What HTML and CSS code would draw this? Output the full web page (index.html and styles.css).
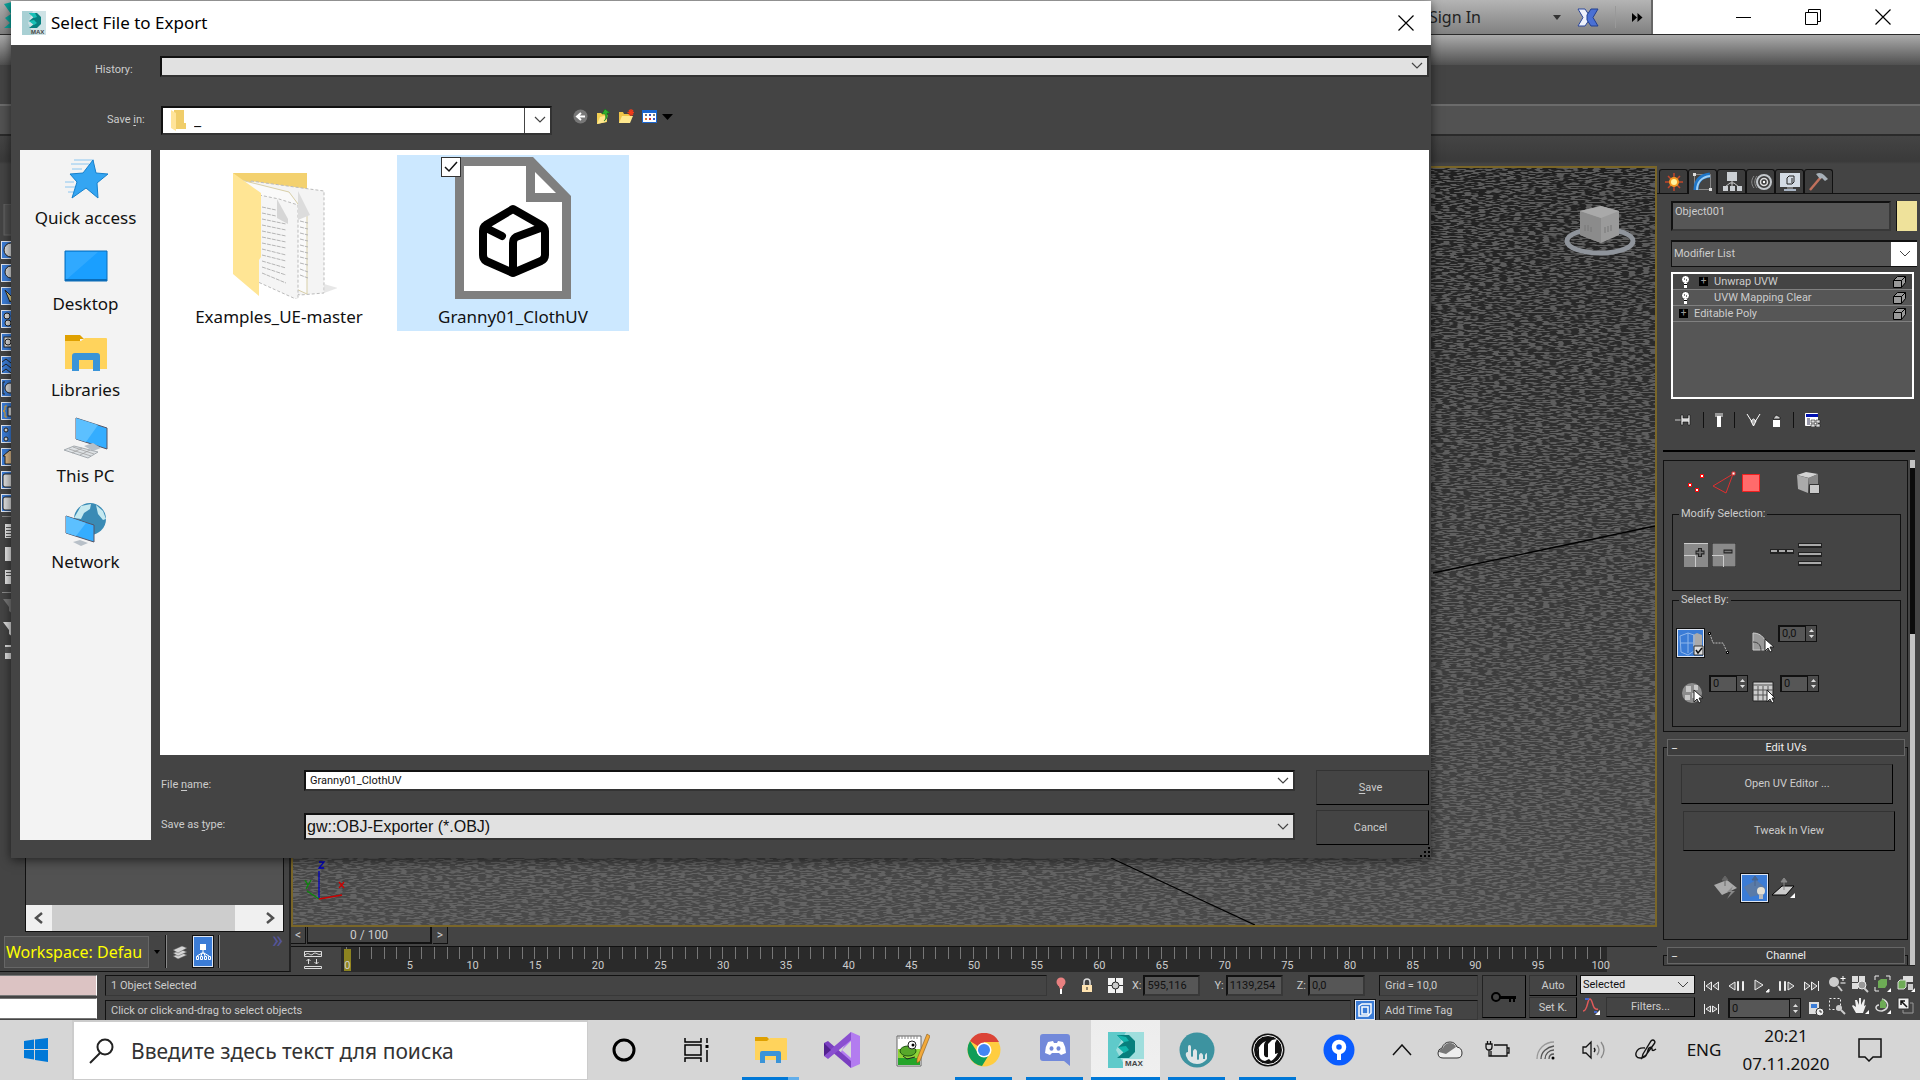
FILE: index.html
```html
<!DOCTYPE html>
<html lang="en">
<head>
<meta charset="utf-8">
<title>Select File to Export</title>
<link rel="stylesheet" href="styles.css">
</head>
<body>
<div class="app">
  <header class="titlebar">
    <svg class="app-logo" width="40" height="34" viewBox="0 0 40 34"><path d="M4 4l8-2 8 8v12l-8 6H4l6-5-5-5 6-4z" fill="#0aa39b"/></svg>
    <div class="info-center">
      <a href="#" class="sign-in">Sign In</a>
      <svg width="8" height="5" viewBox="0 0 8 5"><path d="M0 0h8L4 5z" fill="#333"/></svg>
      <svg class="exchange" width="22" height="19" viewBox="0 0 22 19"><path d="M1 1h7l4 6v5l-4 6H1l5-8.500z" fill="#eef1fa" stroke="#2b479c"/><path d="M21 1h-7l-4 6v5l4 6h7l-5-8.500z" fill="#4a70d4" stroke="#23408f"/></svg>
      <span class="info-sep"></span>
      <svg width="11" height="9" viewBox="0 0 11 9"><path d="M0 0l5 4.500L0 9zM5.500 0l5 4.500-5 4.500z" fill="#000"/></svg>
    </div>
    <div class="window-buttons">
      <button aria-label="Minimize"><svg width="16" height="16" viewBox="0 0 16 16"><path d="M1 8.500h15" stroke="#000"/></svg></button>
      <button aria-label="Restore"><svg width="16" height="16" viewBox="0 0 16 16" fill="none" stroke="#000"><path d="M.5 3.500h12v12H.5zM3.500 3V.5h12v12H13"/></svg></button>
      <button aria-label="Close"><svg width="16" height="16" viewBox="0 0 16 16"><path d="M.5.500l15 15M15.500.500l-15 15" stroke="#000" stroke-width="1.200"/></svg></button>
    </div>
  </header>
  <div class="menu-strip"></div>
  <div class="toolbar-strip"></div>
  <div class="ribbon-strip"></div>
  <div class="ribbon-foot"></div>

  <main class="workspace">
    <section class="explorer">
      <div class="explorer-tools">
        <svg width="30" height="500" viewBox="0 0 30 500">
          <rect x="4" y="0" width="24" height="31" fill="#505050" stroke="#666"/>
          <g fill="#3b7cd6" stroke="#dfe6f2">
            <rect x="1.500" y="37.500" width="20" height="17"/><rect x="1.500" y="60.500" width="20" height="17"/><rect x="1.500" y="83.500" width="20" height="17"/><rect x="1.500" y="106.500" width="20" height="17"/><rect x="1.500" y="129.500" width="20" height="17"/><rect x="1.500" y="152.500" width="20" height="17"/><rect x="1.500" y="175.500" width="20" height="17"/><rect x="1.500" y="198.500" width="20" height="17"/><rect x="1.500" y="221.500" width="20" height="17"/><rect x="1.500" y="244.500" width="20" height="17"/><rect x="1.500" y="267.500" width="20" height="17"/><rect x="1.500" y="290.500" width="20" height="17"/>
          </g>
          <g fill="#dcdcdc" stroke="#222">
            <circle cx="11" cy="46" r="7"/><circle cx="11" cy="68" r="6"/><path d="M5 86l8 8-3 4z" fill="#e8d48a"/><circle cx="7" cy="112" r="3"/><circle cx="8" cy="119" r="3"/><rect x="4" y="133" width="14" height="10"/><circle cx="8" cy="138" r="3"/>
            <path d="M2 158l4-3 5 4M2 163l4-3 5 4M2 168l4-3 5 4" fill="none"/><circle cx="10" cy="184" r="5"/><path d="M5 178H3v12h2" fill="none"/><path d="M7 202H5v4l-2 1 2 1v5h2" fill="none" stroke="#e8a020"/><rect x="8" y="203" width="8" height="9"/><circle cx="6" cy="226" r="2"/><circle cx="6" cy="235" r="2"/><path d="M3 252l7-6 7 6v8H5v-8z" fill="#dcb98a"/><rect x="3" y="270" width="12" height="13" rx="2"/><rect x="3" y="293" width="12" height="13" rx="2"/>
          </g>
          <path d="M2 312.500h28M2 388.500h28" stroke="#888"/>
          <g fill="#e6e6e6"><rect x="5" y="320" width="12" height="14"/><rect x="5" y="343" width="12" height="14"/><rect x="5" y="366" width="12" height="14"/></g>
          <path d="M6 323.500h10M6 326.500h10M6 329.500h10M6 332.500h10M6 368.500h10M6 371.500h10" stroke="#555"/>
          <path d="M3 395h16l-6 7v8l-4-3v-4z" fill="#777"/><path d="M3 418h16l-6 7v8l-4-3v-4z" fill="#ddd"/><path d="M5 441h12v14H5z" fill="#ddd"/><path d="M5 443h12v6H5z" fill="#555"/>
        </svg>
      </div>
      <div class="scene-column">
        <div class="scene-tree"></div>
        <div class="hscroll">
          <button aria-label="Scroll left"><svg width="10" height="12" viewBox="0 0 10 12"><path d="M8 1L2 6l6 5" fill="none" stroke="#505050" stroke-width="2.500"/></svg></button>
          <div class="hscroll-thumb"></div>
          <button aria-label="Scroll right"><svg width="10" height="12" viewBox="0 0 10 12"><path d="M2 1l6 5-6 5" fill="none" stroke="#505050" stroke-width="2.500"/></svg></button>
        </div>
      </div>
      <div class="workspace-bar">
        <button class="workspace-name">Workspace: Defau</button>
        <svg width="6" height="4" viewBox="0 0 6 4"><path d="M0 0h6L3 4z"/></svg>
        <span class="bar-line"></span>
        <button class="tool" aria-label="Layers"><svg width="16" height="16" viewBox="0 0 16 16" fill="#d6d6d6" stroke="#555" stroke-width=".5"><path d="M1 12l9-3 5 2-9 4z"/><path d="M1 9l9-3 5 2-9 4z"/><path d="M1 6l9-4 5 2-9 5z"/></svg></button>
        <button class="tool tool-on tall" aria-label="Scene explorer"><svg width="16" height="18" viewBox="0 0 16 18" fill="#fff"><path d="M5 1h6v6H5z"/><path d="M8 7v4M2 13l5-3h2l5 3M6 13l1-3M10 13l-1-3M1.500 13.500h2v3h-2zM5.500 13.500h2v3h-2zM9.500 13.500h2v3h-2zM13.500 13.500h2v3h-2z" stroke="#fff" fill="none"/></svg></button>
        <span class="bar-line"></span>
        <span class="more">»</span>
      </div>
    </section>

    <section class="stage">
      <div class="viewport">
        <svg class="grid-noise" width="100%" height="100%">
          <defs>
            <filter id="weave" x="0" y="0" width="100%" height="100%" color-interpolation-filters="sRGB">
              <feTurbulence type="fractalNoise" baseFrequency="0.14 0.7" numOctaves="1" seed="4"/>
              <feColorMatrix values="0 0 0 0 .42  0 0 0 0 .42  0 0 0 0 .42  9 0 0 0 -4.200"/>
            </filter>
            <linearGradient id="depth" x1="0" y1="0" x2="0" y2="1"><stop offset="0" stop-color="#202020"/><stop offset=".5" stop-color="#373737"/><stop offset="1" stop-color="#4a4a4a"/></linearGradient>
          </defs>
          <rect width="100%" height="100%" fill="url(#depth)"/>
          <rect width="100%" height="100%" filter="url(#weave)" opacity=".8"/>
        </svg>
        <svg class="grid-axes" viewBox="0 0 1362 757" preserveAspectRatio="xMaxYMax slice">
          <path d="M1140 405L1362 358M818 690L962 757" stroke="#000" stroke-width="1.300" fill="none"/>
          <g transform="translate(1307 62)">
            <ellipse cx="0" cy="11" rx="33" ry="12" fill="none" stroke="#8f949b" stroke-width="5"/>
            <path d="M-20-19L1-24l18 5v24L1 13-20 5z" fill="#9a9a9a"/><path d="M-20-19L1-12v25l-21-8z" fill="#8b8b8b"/><path d="M-20-19L1-24l18 5L1-12z" fill="#a9a9a9"/>
            <path d="M-15-5v6m3-6v6m3-4v5m14-5v6m3-7v6m3-7v6" stroke="#777"/>
          </g>
          <g fill="none" stroke-width="1.300"><path d="M26 731v-28" stroke="#0000c0"/><path d="M26 731l23-4M46 714l5 6M51 714l-5 6" stroke="#c00"/><path d="M26 731l-12-8M12 712l3 5M18 712l-5 9" stroke="#0a8a0a"/><path d="M26 694h5l-5 6h5" stroke="#0000c0"/></g>
        </svg>
      </div>
      <div class="time-slider">
        <button aria-label="Previous frame">&lt;</button>
        <button class="time-handle">0 / 100</button>
        <button aria-label="Next frame">&gt;</button>
      </div>
      <div class="track-bar">
        <button class="curve" aria-label="Open mini curve editor"><svg width="18" height="18" viewBox="0 0 18 18" fill="none" stroke="#ddd"><path d="M.5.500h17v5H.5zM1 4c4-4 5 2 8-1s5 2 8 0M.5 15.500h17v2H.5zM4.500 13V8M2.500 10l2-2 2 2M12.500 8v5M10.500 11l2 2 2-2"/></svg></button>
        <div class="frames">
          <div class="frame-cursor"></div>
          <div class="frame-labels"><span>0</span><span>5</span><span>10</span><span>15</span><span>20</span><span>25</span><span>30</span><span>35</span><span>40</span><span>45</span><span>50</span><span>55</span><span>60</span><span>65</span><span>70</span><span>75</span><span>80</span><span>85</span><span>90</span><span>95</span><span>100</span></div>
        </div>
      </div>
    </section>

    <aside class="command-panel">
      <nav class="tabs">
        <button aria-label="Create"><svg width="22" height="20" viewBox="0 0 22 20"><path d="M11 1v18M2 10h18M5 4l12 12M17 4L5 16" stroke="#c2452a" stroke-width="1.500"/><circle cx="11" cy="10" r="5" fill="#f59a22"/><circle cx="11" cy="10" r="3" fill="#fff3a0"/></svg></button>
        <button class="on" aria-label="Modify"><svg width="22" height="20" viewBox="0 0 22 20"><path d="M2.500 2.500h16v15h-16z" fill="none" stroke="#888"/><path d="M4 18C4 9 9 4 18 3" fill="none" stroke="#1f76c8" stroke-width="5"/><path d="M5 18C5 10 10 5 18 4" fill="none" stroke="#9fd0f5" stroke-width="2"/><path d="M1 1h3v3H1zM17 16h3v3h-3z" fill="#ddd"/></svg></button>
        <button aria-label="Hierarchy"><svg width="22" height="20" viewBox="0 0 22 20"><path d="M11 9v5M4 15l5-4h4l5 4" stroke="#ccc" fill="none"/><path d="M6 0h10v9H6zM2 14h5v5H2zM9 14h5v5H9zM16 14h5v5h-5z" fill="#ccd0d4"/></svg></button>
        <button aria-label="Motion"><svg width="22" height="20" viewBox="0 0 22 20" fill="none"><path d="M4 4c-3 4-3 8 0 12M7 4c-3 4-3 8 0 12" stroke="#888"/><circle cx="14" cy="10" r="7" stroke="#c4c8cc" stroke-width="2"/><circle cx="14" cy="10" r="3.500" stroke="#ddd" stroke-width="1.500"/><circle cx="14" cy="10" r="1.200" fill="#fff"/></svg></button>
        <button aria-label="Display"><svg width="22" height="20" viewBox="0 0 22 20"><path d="M1 1h20v14H1z" fill="#d3dbe4"/><path d="M8 6l2-2h5v6l-2 2H8zM13 6v5" fill="none" stroke="#222"/><path d="M8 15h6v2H8z" fill="#777"/><path d="M5 17h12v2H5z" fill="#a9b5c5"/></svg></button>
        <button aria-label="Utilities"><svg width="22" height="20" viewBox="0 0 22 20"><path d="M13 5L2 18" stroke="#c0705c" stroke-width="2.500"/><path d="M8 2c3-2 6-1 8 1l4 4-3 2-3-3-2 1z" fill="#a7b0b8"/></svg></button>
      </nav>
      <div class="object-row">
        <input class="field" aria-label="Object name" value="Object001">
        <button class="swatch" aria-label="Object color"></button>
      </div>
      <select class="modifier-list" aria-label="Modifier List"><option>Modifier List</option></select>
      <ul class="stack">
        <li class="selected"><svg class="bulb" width="9" height="13" viewBox="0 0 9 13"><circle cx="4.500" cy="4.500" r="4" fill="#fff" stroke="#000" stroke-width=".7"/><path d="M3 8h3v5H3z" fill="#fff"/><path d="M3 4h1m1 1h1M3 9.500h3" stroke="#000"/></svg><span class="plus">+</span><span>Unwrap UVW</span><svg class="box" width="13" height="12" viewBox="0 0 13 12"><path d="M.5 4.500l4-4h8v6l-4 5h-8zM.5 4.500h8v7M8.500 4.500l4-4" fill="#999" stroke="#000"/></svg></li>
        <li><svg class="bulb" width="9" height="13" viewBox="0 0 9 13"><circle cx="4.500" cy="4.500" r="4" fill="#fff" stroke="#000" stroke-width=".7"/><path d="M3 8h3v5H3z" fill="#fff"/><path d="M3 4h1m1 1h1M3 9.500h3" stroke="#000"/></svg><span class="plus none"></span><span>UVW Mapping Clear</span><svg class="box" width="13" height="12" viewBox="0 0 13 12"><path d="M.5 4.500l4-4h8v6l-4 5h-8zM.5 4.500h8v7M8.500 4.500l4-4" fill="#999" stroke="#000"/></svg></li>
        <li class="base"><span class="plus">+</span><span>Editable Poly</span><svg class="box" width="13" height="12" viewBox="0 0 13 12"><path d="M.5 4.500l4-4h8v6l-4 5h-8zM.5 4.500h8v7M8.500 4.500l4-4" fill="#999" stroke="#000"/></svg></li>
      </ul>
      <div class="stack-tools">
        <button aria-label="Pin stack"><svg width="17" height="12" viewBox="0 0 17 12"><path d="M0 6h7" stroke="#ccc"/><path d="M6 1h2v3h5V1h2v10h-2V8H8v3H6z" fill="#ddd" stroke="#111" stroke-width=".6"/></svg></button>
        <span></span>
        <button aria-label="Show end result"><svg width="8" height="14" viewBox="0 0 8 14"><path d="M0 0h8v4H0z" fill="#999"/><path d="M2 3h4v11H2z" fill="#fff"/></svg></button>
        <span></span>
        <button aria-label="Make unique"><svg width="15" height="14" viewBox="0 0 15 14"><path d="M1 1l5 8M14 1L9 9M5 8l2.500 5L10 8 7.500 6z" fill="#aaa" stroke="#fff"/></svg></button>
        <button aria-label="Remove modifier"><svg width="10" height="13" viewBox="0 0 10 13"><path d="M1 6h7v7H1z" fill="#fff"/><path d="M1 5l3-4 4 2v2z" fill="#ccc" stroke="#111" stroke-width=".7"/></svg></button>
        <span></span>
        <button aria-label="Configure sets"><svg width="16" height="14" viewBox="0 0 16 14"><path d="M.5.500h12v12H.5z" fill="#fff" stroke="#fff"/><path d="M1 1h12v3H1z" fill="#0010b0"/><path d="M2 5v7h3V5z" fill="#99a"/><path d="M6 7h4v3H6zM11 7h4v3h-4zM6 11h4v3H6zM11 11h4v3h-4z" fill="#ddd" stroke="#222" stroke-width=".6"/></svg></button>
      </div>
      <div class="rollouts">
        <div class="rollout-column">
          <section class="rollout">
            <div class="subobjects">
              <button aria-label="Vertex"><svg width="20" height="22" viewBox="0 0 20 22" fill="#fff" stroke="#f00"><path d="M2.500 11.500h3v3h-3zM9.500 16.500h3v3h-3zM14.500 2.500h3v3h-3z"/></svg></button>
              <button aria-label="Edge"><svg width="24" height="24" viewBox="0 0 24 24" fill="none" stroke="#e02f2f"><path d="M21 3L1 15l13 7z"/><path d="M20 1h3v3h-3z" fill="#fff"/></svg></button>
              <button aria-label="Polygon"><svg width="18" height="18" viewBox="0 0 18 18"><path d="M.5.500h17v17H.5z" fill="#ff6b6b" stroke="#f02020"/></svg></button>
              <button class="element" aria-label="Element"><svg width="24" height="24" viewBox="0 0 24 24"><path d="M1 4l9-3 12 2-9 4z" fill="#d4d4d4"/><path d="M1 4l11 3v15L2 18z" fill="#aaa"/><path d="M12 7l10-4v12l-9 7z" fill="#888"/><path d="M13.500 13.500h10v9h-10z" fill="#c9c9c9" stroke="#333"/></svg></button>
            </div>
            <fieldset class="modify">
              <legend>Modify Selection:</legend>
              <button aria-label="Grow"><svg width="24" height="24" viewBox="0 0 24 24"><path d="M0 0h24v24H0z" fill="#8a8a8a"/><path d="M0 12.500h11.500V24M0 .5h24" stroke="#ccc" fill="none"/><path d="M16 5v9M11.500 9.500h9" stroke="#222" stroke-width="4"/><path d="M16 6v7M12.500 9.500h7" stroke="#777" stroke-width="1.500"/></svg></button>
              <button aria-label="Shrink"><svg width="24" height="24" viewBox="0 0 24 24"><path d="M0 0h24v24H0z" fill="#8a8a8a" stroke="#222"/><path d="M0 12.500h11.500V24" stroke="#ccc" fill="none"/><path d="M11.500 8.500h9" stroke="#222" stroke-width="4"/><path d="M12.500 8.500h7" stroke="#777" stroke-width="1.500"/></svg></button>
              <button class="ring" aria-label="Loop"><svg width="24" height="6" viewBox="0 0 24 6"><path d="M0 0h24v5H0z" fill="#222"/><path d="M1 2h6M9 2h6M17 2h6" stroke="#aaa" stroke-width="2"/></svg></button>
              <button aria-label="Ring"><svg width="24" height="24" viewBox="0 0 24 24"><path d="M0 2.500h24M0 11.500h24M0 20.500h24" stroke="#222" stroke-width="5"/><path d="M1 2h22M1 11h22M1 20h22" stroke="#aaa" stroke-width="2"/></svg></button>
            </fieldset>
            <fieldset class="select-by">
              <legend>Select By:</legend>
              <div class="select-row first">
                <button class="tool-on big" aria-label="Ignore backfacing"><svg width="26" height="26" viewBox="0 0 26 26"><path d="M15 5l4-2 5 2v12h-9z" fill="#aaa"/><path d="M2 6l8-3 6 2v16l-6 4-7-3zM10 3v20M3 13h12" fill="none" stroke="#8fb6ea"/><path d="M16 16h9v9h-9z" fill="#ddd" stroke="#333"/><path d="M18 20l2 3 4-5" fill="none" stroke="#111" stroke-width="1.500"/></svg></button>
                <button aria-label="Point to point"><svg width="22" height="24" viewBox="0 0 22 24" fill="none" stroke="#bbb"><path d="M2 3l3 9h10l4 9" stroke-dasharray="2 1"/><path d="M.5 1.500h2v2h-2zM18.500 20.500h2v2h-2z" fill="#eee" stroke="#000"/></svg></button>
                <button class="angle" aria-label="Planar angle"><svg width="22" height="22" viewBox="0 0 22 22"><path d="M1 1c9 0 14 7 14 17H1z" fill="#999" stroke="#ccc"/><path d="M1 10c6 0 8 4 8 9" fill="none" stroke="#444"/><path d="M13 7v12l3-3 2 4 2-1-2-4h4z" fill="#fff" stroke="#222"/></svg></button>
                <span class="spin"><input aria-label="Angle" value="0,0"><i></i></span>
              </div>
              <div class="select-row">
                <button aria-label="Smoothing group"><svg width="24" height="24" viewBox="0 0 24 24"><circle cx="11" cy="12" r="10" fill="#8c8c8c"/><path d="M5 5h5v6H5zM11 12h5v5h-5zM13 4h4v5h-4zM4 14h5v5H4z" fill="#c7c7c7"/><path d="M13 9v12l3-3 2 4 2-1-2-4h4z" fill="#fff" stroke="#222"/></svg></button>
                <span class="spin"><input aria-label="Smoothing" value="0"><i></i></span>
                <button aria-label="Material id"><svg width="24" height="24" viewBox="0 0 24 24"><path d="M1 1h20v19H1z" fill="#ccc" stroke="#222"/><path d="M1 4h20M1 9h20M1 14h20M6 5v15M11 5v15M16 5v15" stroke="#555"/><path d="M15 9v12l3-3 2 4 2-1-2-4h3z" fill="#fff" stroke="#222"/></svg></button>
                <span class="spin"><input aria-label="Material" value="0"><i></i></span>
              </div>
            </fieldset>
          </section>
          <section class="rollout titled">
            <button class="rollout-title"><b>_</b>Edit UVs</button>
            <button class="wide">Open UV Editor ...</button>
            <button class="wide second">Tweak In View</button>
            <div class="uv-tools">
              <button aria-label="Quick planar"><svg width="24" height="24" viewBox="0 0 24 24"><path d="M0 9l13-5 10 8-15 7z" fill="#aaa"/><path d="M11 10V3M8 4l3-4 3 4z" stroke="#666" fill="#666"/><path d="M19 10l-6 6h4l-4 7 8-8h-4z" fill="#888"/></svg></button>
              <button class="tool-on big" aria-label="Display seams"><svg width="26" height="26" viewBox="0 0 26 26"><path d="M2 12L14 5l10 8-3 6-13 3z" fill="#5a7ba8"/><path d="M13 11V4M10 5l3-4 3 4z" stroke="#4a668e" fill="#4a668e"/><circle cx="19" cy="16" r="4" fill="#e4e0d4"/><path d="M17 19h4v5h-4z" fill="#bbb"/></svg></button>
              <button aria-label="Quick map"><svg width="24" height="24" viewBox="0 0 24 24"><path d="M1 19l10-9h12l-8 9z" fill="#ccc" stroke="#000"/><path d="M13 14V4M10 6l3-4 3 4z" stroke="#888" fill="#888"/><path d="M24 17v5h-5z" fill="#fff"/></svg></button>
            </div>
          </section>
          <section class="rollout titled last">
            <button class="rollout-title"><b>_</b>Channel</button>
          </section>
        </div>
        <div class="vscroll"><div></div></div>
      </div>
    </aside>
  </main>

  <footer class="status">
    <div class="listener"><input class="pink" aria-label="Macro recorder"><input aria-label="Listener"></div>
    <div class="status-main">
      <div class="status-row">
        <p class="sunken grow">1 Object Selected</p>
        <div class="lock-icons">
          <svg width="10" height="18" viewBox="0 0 10 18"><circle cx="5" cy="5" r="4.500" fill="#e88080"/><path d="M2 7h6l-2 5H4z" fill="#e88080"/><path d="M5 12v5" stroke="#fff" stroke-width="2"/></svg>
          <svg width="12" height="15" viewBox="0 0 12 15"><path d="M3 7V4c0-4 6-4 6 0v3" fill="none" stroke="#ddd" stroke-width="1.500"/><path d="M1 7h10v7H1z" fill="#ffe3b0"/><path d="M6 9v3" stroke="#222"/></svg>
          <svg width="15" height="15" viewBox="0 0 15 15"><path d="M0 0h15v15H0z" fill="#f2f2f2"/><path d="M7.500 0v15M0 7.500h15" stroke="#333"/><circle cx="7.500" cy="7.500" r="3.500" fill="#ccc" stroke="#222"/></svg>
        </div>
        <label class="coord">X:<input value="595,116"></label>
        <label class="coord">Y:<input value="1139,254"></label>
        <label class="coord">Z:<input value="0,0"></label>
      </div>
      <div class="status-row">
        <p class="sunken grow">Click or click-and-drag to select objects</p>
        <button class="tool-on iso" aria-label="Isolate"><svg width="14" height="14" viewBox="0 0 14 14" fill="none" stroke="#fff" stroke-width="1.500"><path d="M1 3l3-2h9v9l-3 3H1zM4 4h6v7H4z"/></svg></button>
      </div>
    </div>
    <div class="pair tags"><p class="sunken">Grid = 10,0</p><p class="sunken">Add Time Tag</p></div>
    <button class="key" aria-label="Set keys"><svg width="26" height="12" viewBox="0 0 26 12"><circle cx="5" cy="6" r="4" fill="none" stroke="#000" stroke-width="2"/><path d="M9 5h16v3H9zM18 7h2v4h-2zM22 7h2v4h-2z"/></svg></button>
    <div class="pair keys"><button>Auto</button><button>Set K.</button></div>
    <div class="pair filters">
      <select aria-label="Key set"><option>Selected</option></select>
      <div class="filter-row"><svg width="18" height="18" viewBox="0 0 18 18"><path d="M1 14c5 0 4-12 7-12s2 12 8 10" fill="none" stroke="#e05a5a" stroke-width="1.500"/><path d="M3 2h4M12 15h3" stroke="#4466cc" stroke-width="2"/><path d="M18 13v5h-5z" fill="#fff"/></svg><button>Filters...</button></div>
    </div>
    <div class="pair play">
      <div class="play-row">
        <svg width="17" height="12" viewBox="0 0 17 12" fill="#666" stroke="#eee"><path d="M1.500 1v10M8.500 2v8L3 6zM15.500 2v8L10 6z"/></svg>
        <svg width="17" height="12" viewBox="0 0 17 12" fill="#666" stroke="#eee"><path d="M7 2v8L1 6zM9.500 1.500h1v9h-1zM14.500 1.500h1v9h-1z"/></svg>
        <svg width="17" height="14" viewBox="0 0 17 14" fill="#666" stroke="#eee"><path d="M2 1l8 5-8 5z"/><path d="M16 10v3h-3z" fill="#fff"/></svg>
        <svg width="17" height="12" viewBox="0 0 17 12" fill="#666" stroke="#eee"><path d="M10 2v8l6-4zM1.500 1.500h1v9h-1zM6.500 1.500h1v9h-1z"/></svg>
        <svg width="17" height="12" viewBox="0 0 17 12" fill="#666" stroke="#eee"><path d="M15.500 1v10M1.500 2v8L7 6zM8.500 2v8L14 6z"/></svg>
      </div>
      <div class="play-row">
        <svg width="17" height="12" viewBox="0 0 17 12" fill="#666" stroke="#eee"><path d="M1.500 1v10M15.500 1v10M7.500 3v6L3 6zM9.500 3v6L14 6z"/></svg>
        <span class="spin frame"><input aria-label="Current frame" value="0"><i></i></span>
        <svg width="16" height="18" viewBox="0 0 16 18"><path d="M0 2h10v12H0z" fill="#ddd"/><path d="M2 4h6v4H2z" fill="#3b7cd6"/><circle cx="11" cy="12" r="4" fill="#eee" stroke="#333"/><path d="M11 10v2h2" stroke="#333" fill="none"/></svg>
      </div>
    </div>
    <div class="nav-tools">
      <svg width="18" height="18" viewBox="0 0 18 18"><circle cx="6" cy="7" r="5" fill="#ccc"/><path d="M10 11l4 5" stroke="#ccc" stroke-width="2"/><path d="M15 1v5M12.500 3.500h5M12.500 8h5" stroke="#fff"/></svg>
      <svg width="18" height="18" viewBox="0 0 18 18"><path d="M1 1h6v6H1zM8 1h6v6H8zM1 8h6v6H1z" fill="#ddd"/><circle cx="11" cy="10" r="4" fill="#999" stroke="#eee"/><path d="M13 13l4 4" stroke="#ccc" stroke-width="2"/></svg>
      <svg width="18" height="18" viewBox="0 0 18 18"><path d="M5 1H1v4M12 1h4v4M1 12v4h4" fill="none" stroke="#eee"/><path d="M4 6l3-2h6v6l-2 3H4z" fill="#6dab55"/><path d="M17 13v4h-4z" fill="#fff"/></svg>
      <svg width="18" height="18" viewBox="0 0 18 18"><path d="M6 1h10v6H6z" fill="#ddd"/><path d="M1 7l2-2h6v7l-2 2H1z" fill="#6dab55" stroke="#ddd"/><path d="M11 9h5v6h-5z" fill="#ccc"/><path d="M18 13v4h-4z" fill="#fff"/></svg>
      <svg width="18" height="18" viewBox="0 0 18 18"><path d="M1.500 1.500h11v11h-11z" fill="none" stroke="#eee" stroke-dasharray="2 2"/><circle cx="11" cy="11" r="3" fill="#ccc"/><path d="M13 13l4 4" stroke="#ccc" stroke-width="2"/></svg>
      <svg width="18" height="18" viewBox="0 0 18 18"><path d="M5 16L1 9l1-1 3 2-1-7h2l2 5V1h2v7l3-6 1 1-1 6 2-1-3 8z" fill="#eee"/><path d="M18 13v4h-4z" fill="#fff"/></svg>
      <svg width="18" height="18" viewBox="0 0 18 18"><path d="M8 2c8 3 7 10 0 12C0 14 1 8 5 8" fill="none" stroke="#ddd" stroke-width="1.500"/><path d="M6 5l3-3 3 4v5H6z" fill="#6dab55"/><path d="M17 13v4h-4z" fill="#fff"/></svg>
      <svg width="18" height="18" viewBox="0 0 18 18"><path d="M1 1h11v11H1z" fill="#eee" stroke="#333"/><path d="M4 4l6 6M4 8V4h4" stroke="#111" fill="none" stroke-width="1.500"/><path d="M13 6h3v10H6v-3" fill="none" stroke="#999"/></svg>
    </div>
  </footer>
</div>

<section class="dialog" role="dialog" aria-label="Select File to Export">
  <header class="dialog-title">
    <svg width="24" height="24" viewBox="0 0 24 24"><path d="M0 0h24v24H0z" fill="#cfe3e6"/><path d="M0 0h11L6 12l6 12H0z" fill="#8fc3c8" opacity=".6"/><path d="M7 2h8l4 4v7l-4 4H7l5-4-5-3 5-4z" fill="#06807f"/><path d="M7 2h6l2 4-3 1zM7 10l5-1 3 3-3 2z" fill="#19c0b6"/><text x="9" y="23" class="max-tag">MAX</text></svg>
    <h1>Select File to Export</h1>
    <button aria-label="Close dialog"><svg width="16" height="16" viewBox="0 0 16 16"><path d="M.5.500l15 15M15.500.500l-15 15" stroke="#000" stroke-width="1.200"/></svg></button>
  </header>
  <div class="dialog-body">
    <div class="history-row">
      <label for="history">History:</label>
      <select id="history" class="drop gray"><option></option></select>
    </div>
    <div class="savein-row">
      <label for="savein">Save <u>i</u>n:</label>
      <span class="savein-box">
        <svg width="15" height="21" viewBox="0 0 15 21"><path d="M3 0h10v13h2v6H3z" fill="#f0cd6a"/><path d="M0 0l5 3v18l-5-3z" fill="#ffe49a"/></svg>
        <select id="savein" class="drop"><option>_</option></select>
      </span>
      <div class="file-tools">
        <button aria-label="Back"><svg width="15" height="15" viewBox="0 0 15 15"><circle cx="7.500" cy="7.500" r="7" fill="#777"/><path d="M12 7.500H4M8 4L4 7.500 8 11" fill="none" stroke="#fff" stroke-width="2"/></svg></button>
        <button aria-label="Up one level"><svg width="15" height="15" viewBox="0 0 15 15"><path d="M1 4h4l1 1h5v8L1 15z" fill="#f3cf52"/><path d="M4 8l8-2-2 7-9 2z" fill="#ffe88e"/><path d="M8 12c2-2 2-4 1-7H6l3-5 5 4h-3c1 4 0 6-3 8z" fill="#2fae2f" stroke="#0c6e10" stroke-width=".5"/></svg></button>
        <button aria-label="New folder"><svg width="15" height="15" viewBox="0 0 15 15"><path d="M0 3h4l1 2h6v9H0z" fill="#f0c548"/><path d="M0 14l3-7h11l-3 7z" fill="#ffe88e"/><path d="M12 0v7M8.500 3.500h6.500M10 1l4 5M14 1l-4 5" stroke="#f03a1a" stroke-width="1.300"/></svg></button>
        <button aria-label="View menu"><svg width="31" height="15" viewBox="0 0 31 15"><path d="M.5 1.500h14v12H.5z" fill="#fff" stroke="#1a66d0"/><path d="M0 1h15v3H0z" fill="#1a66d0"/><path d="M3 5h2v2H3zM11 5h2v2h-2z" fill="#777"/><path d="M7 5h2v2H7zM11 9h2v2h-2z" fill="#3355cc"/><path d="M3 9h2v2H3z" fill="#e0702a"/><path d="M7 9h2v2H7z" fill="#d03030"/><path d="M20 5h11l-5.500 6z" fill="#000"/></svg></button>
      </div>
    </div>
    <div class="browser">
      <nav class="places">
        <a href="#"><svg width="44" height="44" viewBox="0 0 44 44"><path d="M10 2h20M7 6h18M1 24h9M1 29h12M4 34h8M8 11h10" stroke="#8cc6f0"/><path d="M29 2l3 13 12 1-11 9 1 15-12-10-14 10 5-16-7-8 13-1z" fill="#34a5f2" stroke="#1680cc"/></svg>Quick access</a>
        <a href="#"><svg width="44" height="44" viewBox="0 0 44 44"><path d="M1 7h42v30H1z" fill="#1a9fff" stroke="#0b6cb8"/><path d="M2 36L34 8H2z" fill="#3aaeff" opacity=".7"/><path d="M1 35h42v2H1z" fill="#0b6cb8"/></svg>Desktop</a>
        <a href="#"><svg width="44" height="44" viewBox="0 0 44 44"><path d="M1 5h15l4 4h-4v4H1z" fill="#dfa000"/><path d="M1 11h16l4-3h21q1 0 1 1v30H1z" fill="#ffd35c"/><path d="M8 41V26q0-3 3-3h22q3 0 3 3v15h-7V30H15v11z" fill="#3a94d8"/></svg>Libraries</a>
        <a href="#"><svg width="44" height="44" viewBox="0 0 44 44"><path d="M12 2l31 10v21L12 23z" fill="#34adff" stroke="#556"/><path d="M12 2l22 7-12 17-10-3z" fill="#5cc0ff"/><path d="M20 30l9-3 8 5-8 3z" fill="#b8c0c8"/><path d="M0 34l10-4 24 6-10 6z" fill="#dde1e4" stroke="#a5abb0"/><path d="M5 33l22 7M9 31l21 7M8 37l10-5M16 39l10-5" stroke="#999" stroke-width=".7"/></svg>This PC</a>
        <a href="#"><svg width="44" height="44" viewBox="0 0 44 44"><circle cx="26" cy="17" r="16" fill="#3a8bb5"/><path d="M17 4l10-2-1 5-6 4-3 6-7-1zM32 3l7 6 3 8-3 1-5-6z" fill="#c5e9f0"/><path d="M2 14l28 9v17L2 31z" fill="#34adff" stroke="#556"/><path d="M2 14l20 7L12 34 2 31z" fill="#5cc0ff"/><path d="M9 40l7-2 8 3-7 3z" fill="#b8c0c8"/></svg>Network</a>
      </nav>
      <div class="files">
        <figure class="file">
          <svg width="116" height="144" viewBox="0 0 116 144">
            <path d="M12 18h74v100H12z" fill="#f3d16f"/>
            <path d="M30 26l73 10v102l-24 2-49-20z" fill="#f4f4f4" stroke="#bbb" stroke-dasharray="3 2"/>
            <path d="M103 129l14 4-14 5z" fill="#ddd" opacity=".7"/>
            <path d="M20 25l48 12 18 24v78l-48-22z" fill="#fafafa" stroke="#d8cfa8"/>
            <path d="M38 40l20 4 19 6v95l-40-18z" fill="#f5f5f5" stroke="#bbb" stroke-dasharray="3 2"/>
            <path d="M56 44l11 20v5l-11-6z" fill="#d6d6d6"/><path d="M77 36l12 24-12 5z" fill="#dcdcdc"/>
            <path d="M41 52l14 3M41 58l14 3M41 64l24 5M41 70l24 5M41 76l24 5M41 82l24 5M41 88l24 5M41 94l24 6M41 100l24 6M41 106l24 7M41 112l24 8M41 118l24 10M79 66l8 2M79 72l8 2M79 78l8 2M79 84l8 2M79 90l8 2M79 96l8 2M79 102l8 2M79 108l8 2M79 114l8 3M79 120l8 3" stroke="#b5b5b5" stroke-dasharray="4 1"/>
            <path d="M12 18l28 20v64l-2 3v36l-26-22z" fill="#ffe594"/>
          </svg>
          <figcaption>Examples_UE-master</figcaption>
        </figure>
        <figure class="file chosen">
          <input type="checkbox" checked aria-label="Granny01_ClothUV">
          <svg width="116" height="144" viewBox="0 0 116 144">
            <path d="M4 6h75l33 35v99H4z" fill="#fff"/><path d="M0 2h78l38 39v105H0zM9 11v125h98V47H71V11zM80 17v21h21z" fill="#7f7f7f" fill-rule="evenodd"/>
            <path d="M58 54L86 70q4 2 4 6v24q0 4-4 6L58 118 31 106q-3-2-3-6V76q0-4 3-6zM58 118V88q0-4 3-6L88 72M29 72l18 9" fill="none" stroke="#000" stroke-width="8" stroke-linecap="round" stroke-linejoin="round"/>
          </svg>
          <figcaption>Granny01_ClothUV</figcaption>
        </figure>
      </div>
    </div>
    <div class="save-form">
      <label for="filename">File <u>n</u>ame:</label>
      <select id="filename" class="drop small"><option>Granny01_ClothUV</option></select>
      <button class="push"><u>S</u>ave</button>
      <label for="filetype">Save as <u>t</u>ype:</label>
      <select id="filetype" class="drop gray arial"><option>gw::OBJ-Exporter (*.OBJ)</option></select>
      <button class="push">Cancel</button>
    </div>
    <svg class="grip" width="11" height="11" viewBox="0 0 11 11"><path d="M8 0h2v2H8zM4 4h2v2H4zM8 4h2v2H8zM0 8h2v2H0zM4 8h2v2H4zM8 8h2v2H8z" fill="#000"/></svg>
  </div>
</section>

<footer class="taskbar">
  <button class="start" aria-label="Start"><svg width="24" height="24" viewBox="0 0 24 24" fill="#0078d7"><path d="M0 3l10-1.500V11H0zM11 1.500L24 0v11H11zM0 12h10v9.500L0 20zM11 12h13v12l-13-2z"/></svg></button>
  <label class="search"><svg width="26" height="26" viewBox="0 0 26 26" fill="none" stroke="#222" stroke-width="2"><circle cx="16" cy="9" r="7.500"/><path d="M11 15L1 25"/></svg><input placeholder="Введите здесь текст для поиска"></label>
  <div class="apps">
    <button aria-label="Cortana"><svg width="24" height="24" viewBox="0 0 24 24"><circle cx="12" cy="12" r="10" fill="none" stroke="#000" stroke-width="3"/></svg></button>
    <button class="taskview" aria-label="Task view"><svg width="26" height="24" viewBox="0 0 26 24" fill="none" stroke="#000" stroke-width="1.500"><path d="M1 0v4h16V0M1 7h16v10H1zM1 24v-4h16v4M23 0v5M23 12v12"/><path d="M21.500 7h3v3h-3z" fill="#000" stroke="none"/></svg></button>
    <button class="open multi" aria-label="File Explorer"><svg width="32" height="28" viewBox="0 0 32 28"><path d="M0 1h12l3 3-3 2H0z" fill="#dfa000"/><path d="M0 5h12l3-3h16q1 0 1 1v21H0z" fill="#ffd35c"/><path d="M5 27V17q0-2 2-2h17q2 0 2 2v10h-5v-7H10v7z" fill="#3a94d8"/></svg></button>
    <button aria-label="Visual Studio"><svg width="36" height="36" viewBox="0 0 36 36"><path d="M27 0l9 4v28l-9 4-12-12z" fill="#b37cf0"/><path d="M0 11l4-2 23 20v7L0 13z" fill="#7a3fc0"/><path d="M27 0v8L4 27l-4-3V11l6 7z" fill="#8a4fd0"/><path d="M0 11l7 7-7 6z" fill="#52218f"/><path d="M27 9v17l-9-8z" fill="#d8d8d8"/></svg></button>
    <button aria-label="Notepad++"><svg width="34" height="34" viewBox="0 0 34 34"><path d="M1 3h24v30H1z" fill="#fff" stroke="#666"/><path d="M2 16h22v16H2z" fill="#8fd437"/><path d="M2 25h22v7H2z" fill="#25a52a"/><path d="M3 3v3M6 3v3M9 3v3M12 3v3M15 3v3M18 3v3M21 3v3" stroke="#888"/><ellipse cx="12" cy="18" rx="8" ry="5" fill="#57a82a" stroke="#1c5410"/><circle cx="16" cy="12" r="4" fill="#fff" stroke="#222"/><circle cx="17" cy="12" r="1.500"/><path d="M7 23l4 3 8-2" stroke="#222" fill="none"/><path d="M31 1l3 2-10 25-3 2v-4z" fill="#f2a93a" stroke="#8a5a1a" stroke-width=".6"/></svg></button>
    <button class="open" aria-label="Chrome"><svg width="34" height="34" viewBox="0 0 34 34"><circle cx="17" cy="17" r="16.500" fill="#ffcd40"/><path d="M17 17L3 8A16.500 16.500 0 0 1 32 9H17z" fill="#db4437"/><path d="M3 8A16.500 16.500 0 0 0 15 33l8-13-6-3-6 3z" fill="#0f9d58"/><circle cx="17" cy="17" r="7.500" fill="#fff"/><circle cx="17" cy="17" r="6" fill="#4285f4"/></svg></button>
    <button class="open" aria-label="Discord"><svg width="30" height="32" viewBox="0 0 30 32"><path d="M3 0h24q3 0 3 3v29l-6-5H3q-3 0-3-3V3q0-3 3-3z" fill="#7289da"/><path d="M8 8l5-1 1 2h3l1-2 5 1q3 5 3 11l-5 2-2-2h-7l-2 2-5-2q0-6 3-11z" fill="#fff"/><ellipse cx="11.500" cy="14.500" rx="2" ry="2.300" fill="#7289da"/><ellipse cx="18.500" cy="14.500" rx="2" ry="2.300" fill="#7289da"/></svg></button>
    <button class="open active" aria-label="3ds Max"><svg width="36" height="36" viewBox="0 0 36 36"><path d="M0 0h36v36H0z" fill="#9fdedd"/><path d="M0 0h18L8 18l10 18H0z" fill="#45c2c2" opacity=".7"/><path d="M9 3h12l6 6v11l-6 6H9l7-6-6-5 6-5z" fill="#077f7d"/><path d="M9 3l9 2 3 4-5 1zM10 15l8-1 3 4-5 3z" fill="#12b5ac"/><path d="M15 27h21v9H15z" fill="#e8eeee"/><text x="17" y="34" class="max-tag big-tag">MAX</text></svg></button>
    <button class="open" aria-label="Marmoset"><svg width="36" height="36" viewBox="0 0 36 36"><circle cx="18" cy="18" r="17.500" fill="#3d93a0"/><path d="M7 24q-1-4 2-4V15q0-2 1.500-2t1.500 2v9q1 2 2 0v-5q1-2 2-2t2 2v8q1 2 2 0v-4q1-2 2-2t2 2v4h2v-4q1-2 2-2v6q-4 5-10 5-8 0-11-8z" fill="#dfe6e7"/></svg></button>
    <button class="open" aria-label="Unreal Engine"><svg width="34" height="34" viewBox="0 0 34 34"><circle cx="17" cy="17" r="16.500" fill="#111"/><circle cx="17" cy="17" r="14.500" fill="none" stroke="#fff"/><path d="M6 19q2-8 9-11-2 2-2 4v10q1 3 4 2V11l4-4v1-1l5-1-2 4v11l3-1q-3 6-7 8l-2-2-4 2q-6-1-6-7V14q-1 1-2 5z" fill="#fff"/></svg></button>
    <button aria-label="Sourcetree"><svg width="32" height="32" viewBox="0 0 32 32"><circle cx="16" cy="16" r="15.500" fill="#0a5cff"/><circle cx="16" cy="13" r="5" fill="none" stroke="#fff" stroke-width="4.500"/><path d="M14 18h4v8h-4z" fill="#fff"/></svg></button>
  </div>
  <div class="tray">
    <button aria-label="Show hidden icons"><svg width="20" height="12" viewBox="0 0 20 12" fill="none" stroke="#111" stroke-width="1.500"><path d="M1 11l9-10 9 10"/></svg></button>
    <button aria-label="OneDrive"><svg width="26" height="18" viewBox="0 0 26 18"><path d="M6 17q-5 0-5-5 0-4 4-5 2-6 8-6 5 0 7 5 5 1 5 6 0 5-5 5z" fill="#eee" stroke="#333"/><path d="M2 11q0-3 4-4 2-5 7-5 4 0 6 4l-10 7z" fill="#777"/></svg></button>
    <button aria-label="Battery"><svg width="26" height="18" viewBox="0 0 26 18" fill="none" stroke="#111" stroke-width="1.300"><path d="M9 4h13v11H6v-5M22 7h2v5h-2M1 3h6v3q0 3-3 3t-3-3zM2.500 0v3M5.500 0v3M4 9v6h2"/></svg></button>
    <button aria-label="Wi-Fi"><svg width="20" height="20" viewBox="0 0 20 20" fill="none" stroke="#555" stroke-width="1.300"><path d="M1 19C1 9 9 2 18 2" stroke="#999"/><path d="M5 19c0-7 6-12 13-13M9 19c0-5 4-9 9-9"/><path d="M13 19c0-3 2-5 5-5"/><circle cx="17" cy="18" r="1.500" fill="#000" stroke="none"/></svg></button>
    <button aria-label="Volume"><svg width="24" height="20" viewBox="0 0 24 20" fill="none" stroke="#111" stroke-width="1.300"><path d="M1 7h3l5-5v16l-5-5H1zM12 8q2 2 0 4"/><path d="M15 5q4 5 0 10M19 2q6 8 0 16" stroke="#888"/></svg></button>
    <button class="pen" aria-label="Ink workspace"><svg width="22" height="22" viewBox="0 0 22 22" fill="none" stroke="#111" stroke-width="1.400"><path d="M8 15L16 2q2-2 3.500 0 1 1-.5 3l-8 11-4 3zM10 9c-10-1-12 10-5 10 9 0 7-9 9-10q3-2 3 1 0 3 4 0"/></svg></button>
    <button class="lang">ENG</button>
    <time class="clock" datetime="2020-11-07T20:21">20:21<br>07.11.2020</time>
    <button class="notes" aria-label="Notifications"><svg width="24" height="24" viewBox="0 0 24 24" fill="none" stroke="#111" stroke-width="1.500"><path d="M1 1h22v18h-8l-4 4-4-4H1z"/></svg></button>
  </div>
</footer>
</body>
</html>
```
FILE: styles.css
```css
* { box-sizing: border-box; }
body {
  margin: 0;
  min-height: 100vh;
  position: relative;
  display: flex;
  flex-direction: column;
  background: #444;
  color: #ccc;
  font: 11px/14px Roboto, "Noto Sans", sans-serif;
  overflow: hidden;
}
button, input, select { font: inherit; color: inherit; border-radius: 0; }
button { padding: 0; border: 0; background: none; display: flex; align-items: center; justify-content: center; }
input { min-width: 0; }
select { appearance: none; }
p, h1, ul, figure { margin: 0; padding: 0; }
svg { display: block; flex: none; }
u { text-underline-offset: 2px; }

.sign-in, .workspace-name, .dialog-title h1, .places, .file, .savein-box .drop, .search input, .lang, .clock { font-family: "Noto Sans", sans-serif; }

.app { flex: 1; display: flex; flex-direction: column; min-height: 0; }

/* application header */
.titlebar { height: 35px; display: flex; justify-content: space-between; background: linear-gradient(#b4b4b4, #808080); border-bottom: 1px solid #2a2a2a; }
.info-center { margin-left: auto; display: flex; align-items: center; gap: 16px; padding-right: 8px; border-right: 2px solid #666; }
.sign-in { color: #222; font-size: 16px; text-decoration: none; margin-right: 56px; }
.info-sep { width: 1px; height: 22px; background: #999; }
.window-buttons { display: flex; background: #fff; width: 267px; padding: 0 2px 0 55px; }
.window-buttons button { flex: 1; }
.menu-strip { height: 30px; background: linear-gradient(#ababab, #505050); }
.toolbar-strip { height: 39px; background: #444; }
.ribbon-strip { height: 32px; background: #525252; border-top: 2px solid #6b6b6b; border-bottom: 2px solid #2a2a2a; }
.ribbon-foot { height: 30px; background: linear-gradient(#444, #3a3a3a 90%, #444); border-bottom: 2px solid #444; }

.workspace { flex: 1; display: flex; min-height: 0; }

/* scene explorer */
.explorer { width: 291px; display: grid; grid-template: 1fr 39px / 25px 1fr; border-bottom: 1px solid #111; border-right: 2px solid #222; }
.explorer-tools { padding-top: 38px; overflow: hidden; }
.scene-column { display: flex; flex-direction: column; margin-right: 5px; border: 1px solid #111; border-top: 0; }
.scene-tree { flex: 1; background: #525252; }
.hscroll { height: 26px; display: flex; background: #f0f0f0; }
.hscroll button { width: 26px; }
.hscroll-thumb { flex: 1; background: #cdcdcd; margin-right: 22px; }
.workspace-bar { grid-column: 1 / 3; display: flex; align-items: center; gap: 5px; padding: 0 6px 0 4px; }
.workspace-name { width: 145px; height: 32px; justify-content: flex-start; padding-left: 1px; overflow: hidden; white-space: nowrap; color: #ff0; font-size: 16px; background: #505050; border: 1px solid #666; }
.bar-line { width: 2px; height: 33px; background: #888; border-left: 1px solid #111; }
.tool-on { background: #3b7cd6; border: 1px solid #dfe6f2; outline: 1px solid #111; }
.tall { width: 20px; height: 31px; }
.more { color: #55559a; font-size: 24px; margin: -24px 0 0 auto; }

/* viewport and time line */
.stage { flex: 1; min-width: 0; display: flex; flex-direction: column; }
.viewport { flex: 1; min-height: 0; position: relative; border: 2px solid #7a6628; overflow: hidden; }
.grid-noise, .grid-axes { position: absolute; inset: 0; width: 100%; height: 100%; }
.time-slider { height: 19px; display: flex; align-items: stretch; gap: 1px; padding-bottom: 2px; }
.time-slider button { width: 15px; border: solid #111; border-width: 0 1px 1px 0; font-size: 12px; }
.time-slider .time-handle { width: 125px; border-width: 0 2px 2px 1px; }
.track-bar { height: 26px; display: flex; border-top: 1px solid #111; padding-right: 50px; }
.curve { width: 50px; padding-right: 7px; }
.frames {
  flex: 1; position: relative; min-width: 0; background: #2a2a2a;
  --cell: calc(100% / 101);
}
.frames::before {
  content: ""; position: absolute; inset: 0 0 13px;
  background: repeating-linear-gradient(90deg, transparent 0 calc(100% / 202 - 1px), #777 calc(100% / 202 - 1px) calc(100% / 202), transparent calc(100% / 202) calc(100% / 101));
}
.frame-labels { position: absolute; inset: 10px calc(var(--cell) * -2) 0; display: grid; grid-template-columns: repeat(21, 1fr); text-align: center; line-height: 17px; }
.frame-cursor { position: absolute; left: 3px; top: 2px; bottom: 1px; width: 7px; background: #8c8320; }

/* command panel */
.command-panel { width: 263px; display: flex; flex-direction: column; background: #444; padding-bottom: 6px; }
.tabs { display: flex; height: 28px; padding: 3px 0 0 2px; border-bottom: 1px solid #111; }
.tabs button { width: 29px; border: 1px solid #111; border-bottom: 0; border-radius: 3px 3px 0 0; background: #3c3c3c; }
.tabs .on { background: #444; margin-bottom: -1px; }
.object-row { display: flex; gap: 5px; margin: 7px 3px 9px 14px; height: 30px; }
.field { flex: 1; padding: 0 2px 8px; background: #565656; border: 2px solid #111; border-right-color: #383838; border-bottom-color: #383838; }
.swatch { width: 21px; background: #efe29b; border-left: 1px solid #111; }
.modifier-list {
  margin: 0 3px 5px 14px; height: 27px; padding-left: 2px; border: solid #111; border-width: 2px 0 1px 1px;
  background: url("data:image/svg+xml,%3Csvg xmlns='http://www.w3.org/2000/svg' width='26' height='24'%3E%3Cpath d='M0 0h26v24H0z' fill='%23fff'/%3E%3Cpath d='M9 9l5 5 5-5' fill='none' stroke='%23444'/%3E%3C/svg%3E") right center no-repeat #565656;
}
.stack { list-style: none; height: 127px; margin: 0 6px 0 14px; border: 2px solid #fff; background: #565656; }
.stack li { height: 16px; display: flex; align-items: center; padding: 0 6px 0 8px; border-bottom: 1px solid #808080; }
.stack .selected { background: #444; }
.stack .base { padding-left: 6px; }
.stack .base .plus { margin-left: 0; margin-right: 6px; }
.plus { width: 9px; height: 9px; margin: 0 6px 0 9px; background: #000; color: #999; font-size: 10px; line-height: 8px; text-align: center; }
.plus.none { background: none; }
.box { margin-left: auto; }
.stack-tools { display: flex; align-items: center; gap: 11px; height: 42px; padding: 0 0 0 18px; }
.stack-tools span { width: 1px; height: 16px; background: #111; }
.rollouts { flex: 1; min-height: 0; display: flex; gap: 2px; margin: 9px 5px 0 6px; padding-top: 8px; border-top: 2px solid #000; border-bottom: 1px solid #222; }
.rollout-column { flex: 1; min-width: 0; display: flex; flex-direction: column; }
.rollout { border: 1px solid #111; padding: 0 6px 4px 8px; }
.subobjects { display: flex; align-items: center; gap: 6px; height: 44px; padding-left: 14px; }
.subobjects .element { margin-left: 30px; }
fieldset { margin: 0; border: 1px solid #111; padding: 0; min-width: 0; }
legend { margin-left: 6px; padding: 0 2px; line-height: 18px; }
.modify { height: 86px; display: flex; align-items: flex-start; }
.modify button { margin: 20px 0 0 4px; }
.modify legend + button { margin-left: 11px; }
.modify .ring { margin: 26px 0 0 34px; }
.select-by { height: 136px; }
.select-row { display: flex; align-items: center; gap: 4px; height: 50px; padding-left: 8px; }
.select-row.first { margin-top: 9px; padding-left: 4px; }
.big { width: 27px; height: 28px; }
.angle { margin-left: 18px; }
.spin { display: flex; align-self: flex-start; height: 17px; }
.select-row .spin { margin-top: 7px; }
.spin input { width: 27px; padding: 0 2px; background: #565656; border: solid #111; border-width: 2px 0 1px 2px; color: #111; }
.spin i { width: 12px; background: url("data:image/svg+xml,%3Csvg xmlns='http://www.w3.org/2000/svg' width='9' height='15'%3E%3Cpath d='M2 6h5L4.500 3zM2 9h5l-2.500 3z' fill='%23ddd'/%3E%3C/svg%3E") center no-repeat #4c4c4c; border: 1px solid #111; }
.titled { position: relative; margin-top: 15px; padding: 16px 0 0; height: 193px; }
.rollout-title { position: absolute; top: -9px; left: 3px; right: 2px; height: 17px; border: 1px solid #666; background: #3d3d3d; color: #eee; }
.rollout-title b { position: absolute; left: 4px; top: -2px; font-weight: 400; }
.titled .wide { width: 212px; height: 40px; margin-left: 17px; border: 1px solid #333; border-right-color: #000; border-bottom-color: #000; }
.titled .second { margin: 7px 0 0 19px; }
.uv-tools { display: flex; gap: 3px; padding: 23px 0 0 50px; }
.titled.last { height: auto; min-height: 0; padding: 0; flex: 1; border-bottom: 0; }
.vscroll { width: 5px; background: #c4c4c4; padding-top: 8px; }
.vscroll div { height: 166px; background: #0c0c0c; }

/* status bar */
.status { height: 48px; display: flex; padding-top: 3px; overflow: hidden; }
.listener { width: 97px; display: flex; flex-direction: column; gap: 2px; margin-right: 8px; }
.listener input { width: 100%; height: 21px; border: 1px solid #777; border-left: 0; border-right-color: #fff; background: #fff; }
.listener .pink { background: #dcc3c3; }
.status-main { flex: 1; min-width: 0; display: flex; flex-direction: column; gap: 4px; }
.status-row { display: flex; align-items: stretch; height: 21px; }
.sunken { padding: 0 5px; border: 1px solid #111; border-right-color: #383838; border-bottom-color: #383838; line-height: 20px; white-space: nowrap; overflow: hidden; }
.grow { flex: 1; min-width: 0; }
.lock-icons { display: flex; align-items: center; gap: 15px; padding: 0 9px; }
.coord { display: flex; align-items: center; gap: 2px; margin-right: 14px; }
.coord input { width: 57px; height: 21px; padding: 0 2px; background: #565656; border: 2px solid #111; border-right-color: #383838; border-bottom-color: #383838; color: #111; }
.iso { width: 20px; height: 20px; margin: 0 4px; }
.pair { display: flex; flex-direction: column; gap: 4px; }
.tags { width: 99px; margin-right: 4px; }
.tags .sunken { height: 21px; }
.key { width: 44px; height: 43px; margin-right: 3px; border: 1px solid #222; border-right-color: #000; border-bottom-color: #000; }
.keys { width: 48px; gap: 1px; margin-right: 3px; }
.keys button { height: 21px; border: 1px solid #333; border-right-color: #000; border-bottom-color: #000; }
.filters { width: 115px; gap: 3px; margin-right: 8px; }
.filters select {
  height: 19px; padding: 0 2px; border: 1px solid #111; color: #111;
  background: url("data:image/svg+xml,%3Csvg xmlns='http://www.w3.org/2000/svg' width='20' height='8'%3E%3Cpath d='M4 1l5 5 5-5' fill='none' stroke='%23444'/%3E%3C/svg%3E") right center no-repeat #e1e1e1;
}
.filter-row { display: flex; gap: 6px; padding-left: 2px; }
.filter-row button { flex: 1; height: 20px; border: 1px solid #333; border-right-color: #000; border-bottom-color: #000; }
.play { width: 122px; gap: 2px; margin-right: 3px; }
.play-row { display: flex; align-items: center; gap: 8px; height: 21px; }
.frame { flex: 1; height: 20px; min-width: 0; }
.frame input { flex: 1; }
.nav-tools { width: 92px; display: grid; grid-template-columns: repeat(4, 18px); gap: 4px 5px; align-content: start; }

/* export dialog */
.dialog { position: absolute; left: 11px; top: 1px; width: calc(100% - 500px); height: calc(100vh - 223px); display: flex; flex-direction: column; background: #444; box-shadow: 0 2px 10px rgba(0, 0, 0, .6); }
.dialog-title { height: 44px; flex: none; display: flex; align-items: center; gap: 5px; padding: 0 17px 0 11px; background: #fff; color: #000; }
.dialog-title h1 { flex: 1; font-size: 17px; font-weight: 400; line-height: 24px; }
.max-tag { font: 700 6px "Liberation Sans", sans-serif; fill: #444; }
.big-tag { font-size: 8px; }
.dialog-body { flex: 1; display: flex; flex-direction: column; padding: 10px 2px 13px 9px; min-height: 0; position: relative; }
.history-row { display: grid; grid-template-columns: 140px 1fr; align-items: center; height: 21px; }
.history-row label { padding: 8px 0 0 75px; }
.savein-row { display: flex; align-items: center; height: 30px; margin: 29px 0 15px; }
.savein-row label { width: 141px; padding-left: 87px; }
.drop {
  width: 100%; height: 21px; padding: 0 4px; border: 2px solid #111; border-right-color: #333; border-bottom-color: #333; color: #111;
  background: url("data:image/svg+xml,%3Csvg xmlns='http://www.w3.org/2000/svg' width='20' height='8'%3E%3Cpath d='M5 1l5 5 5-5' fill='none' stroke='%23444' stroke-width='1.200'/%3E%3C/svg%3E") right center no-repeat #fff;
}
.gray { background-color: #e1e1e1; }
.savein-box { position: relative; width: 391px; }
.savein-box svg { position: absolute; left: 10px; top: 4px; z-index: 1; }
.savein-box .drop { display: block; height: 29px; padding: 0 0 3px 31px; font-size: 16px; line-height: 22px; }
.savein-box::after { content: ""; position: absolute; right: 27px; top: 2px; bottom: 2px; width: 1px; background: #444; }
.file-tools { display: flex; gap: 8px; margin: -7px 0 0 21px; }
.browser { flex: 1; min-height: 0; display: flex; gap: 9px; }
.places { width: 131px; background: #f3f3f3; padding-top: 8px; margin-bottom: -85px; }
.places a { display: flex; flex-direction: column; align-items: center; height: 86px; color: #111; font-size: 17px; line-height: 28px; gap: 2px; text-decoration: none; }
.files { flex: 1; display: flex; align-items: flex-start; background: #fff; padding: 5px 1px; color: #111; }
.file { position: relative; width: 232px; height: 176px; margin-left: 2px; display: flex; flex-direction: column; align-items: center; font-size: 17px; line-height: 28px; }
.chosen { background: #cce8ff; }
.file input { appearance: none; position: absolute; left: 44px; top: 2px; margin: 0; width: 20px; height: 20px; border: 1px solid #333; background: url("data:image/svg+xml,%3Csvg xmlns='http://www.w3.org/2000/svg' width='18' height='18'%3E%3Cpath d='M3 9l4 4 8-9' fill='none' stroke='%23111' stroke-width='1.500'/%3E%3C/svg%3E") center no-repeat #fff; }
.file figcaption { margin-top: 4px; }
.save-form { display: grid; grid-template-columns: 134px 1fr 113px; grid-template-rows: 35px 35px; gap: 5px 0; padding: 15px 0 0 141px; }
.save-form label { padding-top: 8px; }
.save-form .drop { width: calc(100% - 30px); margin-left: 9px; }
.save-form .arial { height: 27px; margin-top: 3px; padding: 0 1px; font: 16px "Liberation Sans", sans-serif; }
.push { padding-right: 4px; border: 1px solid #333; border-right-color: #000; border-bottom-color: #000; }
.grip { position: absolute; right: 0; bottom: 0; }

/* taskbar */
.taskbar { height: 60px; flex: none; display: flex; background: #d6d6d6; color: #111; overflow: hidden; }
.start { width: 72px; }
.search { width: 516px; display: flex; align-items: center; gap: 16px; padding-left: 15px; background: #fff; border: 1px solid #ccc; border-width: 2px 1px 1px 2px; }
.search input { flex: 1; border: 0; padding: 0; font-size: 21px; background: none; }
.search input::placeholder { color: #333; opacity: 1; }
.apps { display: flex; }
.apps button { width: 71px; position: relative; }
.apps .taskview { width: 76px; }
.apps .active { background: linear-gradient(#ededed, #f0f0f0) center / 69px 100% no-repeat; }
.open::after { content: ""; position: absolute; left: 7px; right: 7px; bottom: 0; height: 3px; background: #0078d7; }
.active::after { left: 1px; right: 1px; }
.multi::after { background: linear-gradient(90deg, #0078d7 46px, #62aeea 46px); }
.tray { margin-left: auto; display: flex; align-items: center; padding-right: 18px; }
.tray button { width: 48px; }
.tray .pen { width: 56px; }
.tray .lang { width: 60px; font-size: 17px; }
.clock { width: 104px; text-align: center; font-size: 17px; line-height: 28px; }
.tray .notes { width: 64px; }
```
